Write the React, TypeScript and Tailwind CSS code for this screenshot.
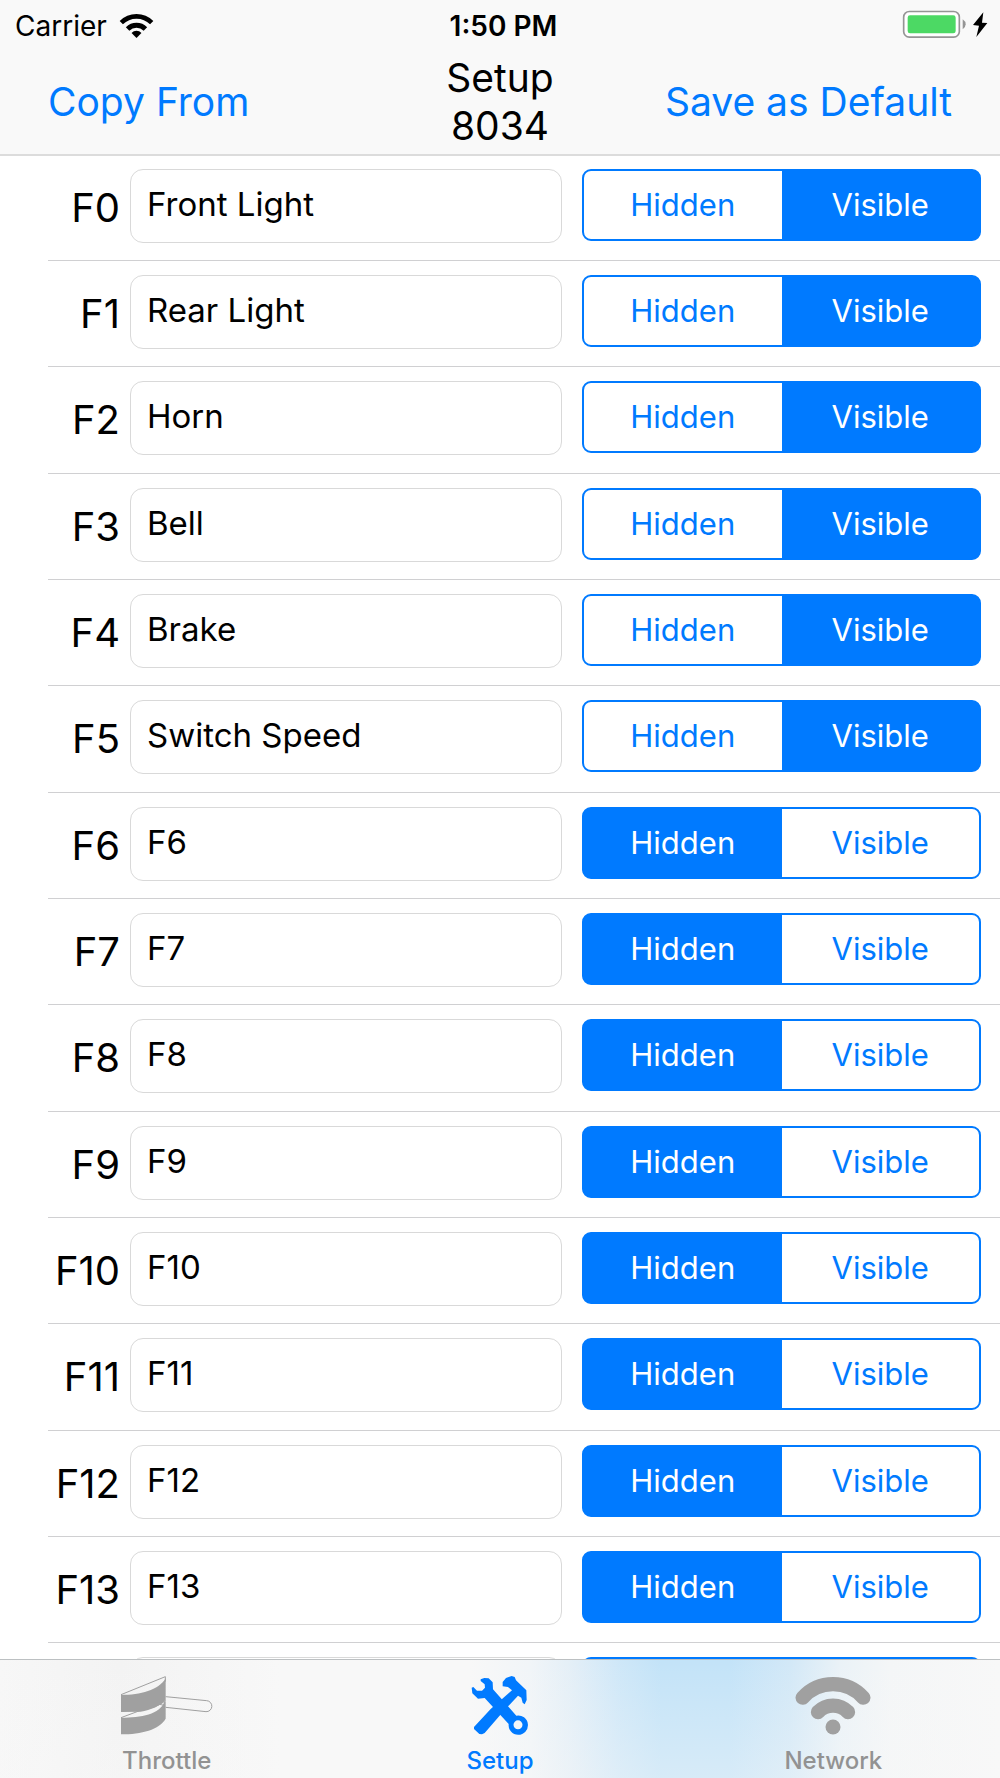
import { useState } from "react";

const initialFunctions = [
  "Front Light", "Rear Light", "Horn", "Bell", "Brake", "Switch Speed",
  "F6", "F7", "F8", "F9", "F10", "F11", "F12", "F13", "F14",
].map((name, i) => ({ id: `F${i}`, name, visible: i < 6 }));

function SignalIcon() {
  return (
    <svg viewBox="0 0 106 78" className="h-[26px] w-[35px]" fill="none" stroke="black" aria-hidden="true">
      <path d="M7 29 A65 65 0 0 1 99 29" strokeWidth="14" />
      <path d="M26 48 A38.500 38.500 0 0 1 80 48" strokeWidth="15" />
      <path d="M53 75 L38 60 A21 21 0 0 1 68 60 Z" fill="black" stroke="none" />
    </svg>
  );
}

function BatteryIcon() {
  return (
    <svg viewBox="0 0 258 84" className="h-7 w-[86px]" aria-hidden="true">
      <rect x="5" y="4.500" width="167" height="77" rx="17" fill="white" stroke="#959595" strokeWidth="5" />
      <rect x="17" y="16" width="144" height="54" rx="7" fill="#4cd964" />
      <path d="M182 28 Q191 34 191 43 Q191 52 182 58 Z" fill="#959595" />
      <path d="M244 7 L213 45 L231 47 L223 81 L256 39 L240 38 Z" fill="black" />
    </svg>
  );
}

function ThrottleIcon() {
  return (
    <svg viewBox="0 0 279 180" className="h-[60px] w-[93px]" fill="none" stroke="#a0a0a0" strokeWidth="3" aria-hidden="true">
      <path d="M3 59 L136 5 V20" />
      <path d="M3 60 C62 60 115 46 137 10 V74 C122 93 92 104 62 110 L3 111 Z" fill="#a0a0a0" stroke="none" />
      <path d="M3 128 L62 106 C98 99 122 90 137 76" />
      <path d="M3 128 C64 128 120 117 133 80 L137 78 V131 C118 164 65 178 3 178 Z" fill="#a0a0a0" stroke="none" />
      <path d="M137 65 L260 77 A16 16 0 0 1 258 110 L137 97 M118 88 L133 91" />
    </svg>
  );
}

function SetupIcon() {
  return (
    <svg viewBox="0 0 180 180" className="size-[60px]" fill="#007aff" aria-hidden="true">
      <path d="M32 13 L43 9 L56 10 L68 22 L69 43 L139 122 A29 29 0 1 1 116 147 L44 69 L24 71 L7 55 L5 38 L10 36 L21 47 L36 47 L45 38 L44 28 L32 18 Z M144 136 A13.500 13.500 0 1 0 144 163 A13.500 13.500 0 1 0 144 136 Z" fillRule="evenodd" />
      <path d="M12 156 L62 102 L126 46 L114 36 L98 34 L98 21 L108 9 L125 3 L134 6 L138 16 L169 46 L170 75 L164 88 L158 83 L154 68 L144 62 L103 106 L44 174 L36 178 L28 177 L12 162 Z" />
    </svg>
  );
}

function NetworkIcon() {
  return (
    <svg viewBox="0 0 234 180" className="h-[60px] w-[78px]" fill="none" stroke="#a0a0a0" strokeLinecap="round" aria-hidden="true">
      <path d="M26 68 A122 122 0 0 1 208 68" strokeWidth="43" />
      <path d="M72 111 A62 62 0 0 1 162 111" strokeWidth="43" />
      <circle cx="117" cy="156" r="22.500" fill="#a0a0a0" stroke="none" />
    </svg>
  );
}

const tabs = [
  { label: "Throttle", Icon: ThrottleIcon, active: false },
  { label: "Setup", Icon: SetupIcon, active: true },
  { label: "Network", Icon: NetworkIcon, active: false },
];

function Segment({ label, selected, onClick }: { label: string; selected: boolean; onClick: () => void }) {
  return (
    <button
      type="button"
      aria-pressed={selected}
      onClick={onClick}
      className={selected ? "flex-1 bg-[#007aff] text-white" : "flex-1 bg-white text-[#007aff]"}
    >
      {label}
    </button>
  );
}

export default function App() {
  const [functions, setFunctions] = useState(initialFunctions);
  const update = (id: string, change: { name?: string; visible?: boolean }) =>
    setFunctions((all) => all.map((f) => (f.id === id ? { ...f, ...change } : f)));

  return (
    <div className="flex h-screen flex-col bg-white font-['Inter','Liberation_Sans',sans-serif] text-black">
      <header className="border-b border-[#dcdcdc] bg-[#f9f9f9] shadow-[0_1px_0_#dcdcdc]">
        <div className="grid grid-cols-[1fr_auto_1fr] items-center pt-2 pr-3 pl-[15px] text-[28px] leading-9">
          <div className="flex items-center gap-3">
            <span>Carrier</span>
            <SignalIcon />
          </div>
          <span className="pl-1 font-semibold">1:50 PM</span>
          <div className="flex justify-end pb-1">
            <BatteryIcon />
          </div>
        </div>
        <nav className="grid grid-cols-[1fr_auto_1fr] items-center px-12 pt-2.5 pb-1 text-[39px] leading-12">
          <button type="button" className="justify-self-start text-[#007aff]">Copy From</button>
          <h1 className="text-center">Setup<br />8034</h1>
          <button type="button" className="justify-self-end text-[#007aff]">Save as Default</button>
        </nav>
      </header>

      <main className="min-h-0 flex-1 overflow-hidden">
        <ul>
          {functions.map((f) => (
            <li
              key={f.id}
              className="ml-12 grid grid-cols-[72px_442fr_419fr] items-start border-b border-[#d0d0d2] pt-3.5 pr-[19px] pb-[17px] nth-[3n]:pb-[18px]"
            >
              <label htmlFor={f.id} className="pt-[15px] text-right text-[40px] leading-12">{f.id}</label>
              <input
                id={f.id}
                type="text"
                value={f.name}
                onChange={(e) => update(f.id, { name: e.target.value })}
                className="ml-2.5 h-[74px] min-w-0 rounded-[13px] border border-[#d9d9d9] bg-white px-4 pb-1 text-[33px] outline-none"
              />
              <div
                role="group"
                aria-label={`${f.id} visibility`}
                className="ml-5 flex h-[72px] overflow-hidden rounded-[9px] border-2 border-[#007aff] bg-[#007aff] text-[31px]"
              >
                <Segment label="Hidden" selected={!f.visible} onClick={() => update(f.id, { visible: false })} />
                <Segment label="Visible" selected={f.visible} onClick={() => update(f.id, { visible: true })} />
              </div>
            </li>
          ))}
        </ul>
      </main>

      <nav className="grid grid-cols-3 border-t border-[#bcc0c2] bg-[#f8f9f9] bg-[linear-gradient(to_bottom,#f8f8f800,#f8f8f860),linear-gradient(to_right,#f7f7f7_0%,#f3f3f3_12%,#f8f8f8_28%,#f8f8f8_47%,#f1f5f8_53%,#e4eff7_57%,#cee7f8_62%,#c3e3f8_66%,#c3e3f8_73%,#d2e8f7_79%,#eaf2f7_84%,#f4f6f7_89%,#f8f8f8_100%)] pt-[15px]">
        {tabs.map(({ label, Icon, active }) => (
          <button
            key={label}
            type="button"
            aria-current={active ? "page" : undefined}
            className={
              active
                ? "flex flex-col items-center gap-[11px] pb-0.5 text-[24px] leading-[30px] font-medium text-[#007aff]"
                : "flex flex-col items-center gap-[11px] pb-0.5 text-[24px] leading-[30px] font-medium text-[#929292]"
            }
          >
            <Icon />
            {label}
          </button>
        ))}
      </nav>
    </div>
  );
}
